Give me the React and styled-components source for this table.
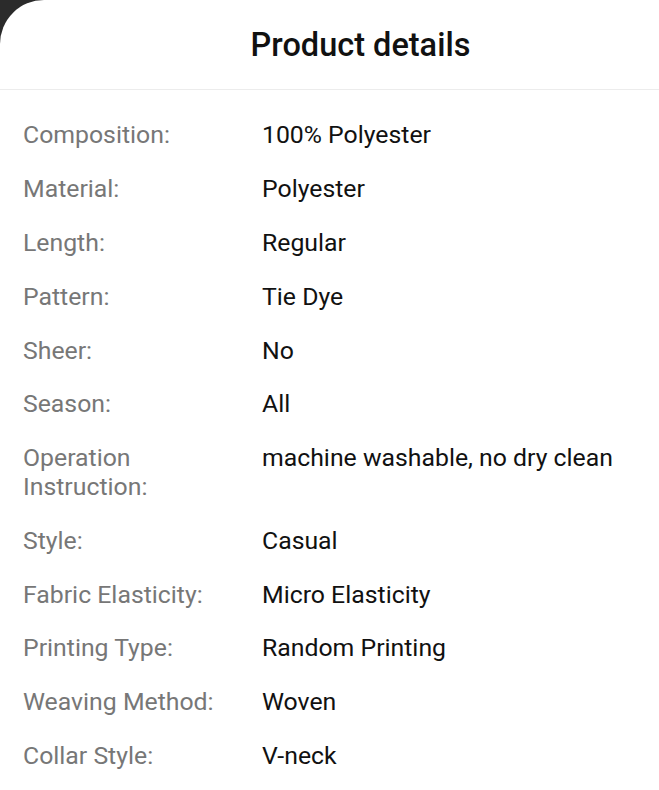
import React from "react";
import styled, { createGlobalStyle } from "styled-components";

const Global = createGlobalStyle`
  html, body { margin: 0; padding: 0; background: #2b2b2b; }
  body { font-family: Roboto, "Noto Sans", sans-serif; }
`;

const Sheet = styled.div`
  width: 659px;
  min-height: 790px;
  background: #fff;
  border-top-left-radius: 44px;
  overflow: hidden;
`;

const Header = styled.div`
  height: 90px;
  display: flex;
  align-items: center;
  justify-content: center;
  padding-left: 62px;
  border-bottom: 1px solid #ececec;
  box-sizing: border-box;
`;

const Title = styled.h1`
  margin: 0;
  font-size: 32.5px;
  font-weight: 500;
  color: #111;
`;

const List = styled.div`
  padding: 18px 23px 0 23px;
  display: grid;
  grid-template-columns: 239px 1fr;
  font-size: 24.8px;
  line-height: 29px;
`;

const Label = styled.div`
  color: #777;
  padding: 12.4px 24px 12.4px 0;
`;

const Value = styled.div`
  color: #111;
  padding: 12.4px 0;
`;

const rows = [
  ["Composition:", "100% Polyester"],
  ["Material:", "Polyester"],
  ["Length:", "Regular"],
  ["Pattern:", "Tie Dye"],
  ["Sheer:", "No"],
  ["Season:", "All"],
  ["Operation Instruction:", "machine washable, no dry clean"],
  ["Style:", "Casual"],
  ["Fabric Elasticity:", "Micro Elasticity"],
  ["Printing Type:", "Random Printing"],
  ["Weaving Method:", "Woven"],
  ["Collar Style:", "V-neck"],
];

export default function App() {
  return (
    <>
      <Global />
      <Sheet>
        <Header>
          <Title>Product details</Title>
        </Header>
        <List>
          {rows.map(([l, v]) => (
            <React.Fragment key={l}>
              <Label>{l}</Label>
              <Value>{v}</Value>
            </React.Fragment>
          ))}
        </List>
      </Sheet>
    </>
  );
}
